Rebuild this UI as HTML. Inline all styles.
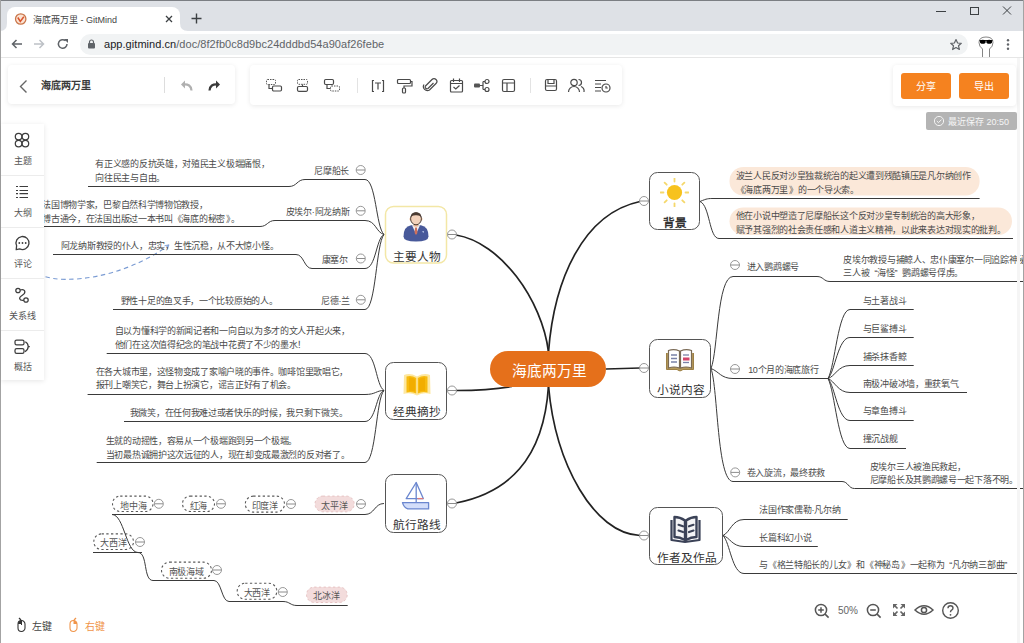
<!DOCTYPE html>
<html lang="zh-CN"><head><meta charset="utf-8"><style>
html,body{margin:0;padding:0;width:1024px;height:643px;overflow:hidden;background:#fff;font-family:"Liberation Sans", sans-serif}
.t{position:absolute;white-space:nowrap;font-family:"Liberation Sans", sans-serif}
svg{display:block}
</style></head><body>
<svg style="position:absolute;left:0;top:0;z-index:0" width="1024" height="643" viewBox="0 0 1024 643"><rect x="729.5" y="167" width="250.10000000000002" height="28.5" rx="14" fill="#fbe8d9"/><rect x="729.5" y="207.5" width="282.5" height="27.5" rx="13.75" fill="#fbe8d9"/><rect x="112.5" y="496.1" width="40.5" height="15.4" rx="7.7" fill="#fff" stroke="#5a5a5a" stroke-width="1.1" stroke-dasharray="2.3 2.4"/><rect x="182.5" y="496.1" width="32.0" height="15.4" rx="7.7" fill="#fff" stroke="#5a5a5a" stroke-width="1.1" stroke-dasharray="2.3 2.4"/><rect x="245.3" y="496.1" width="39.2" height="16.0" rx="8.0" fill="#fff" stroke="#5a5a5a" stroke-width="1.1" stroke-dasharray="2.3 2.4"/><rect x="315.0" y="496.1" width="39.19999999999999" height="15.699999999999932" rx="7.849999999999966" fill="#f3dcdc" stroke="#e6c3c3" stroke-width="1" stroke-dasharray="2.3 2.4"/><rect x="93.8" y="533.9" width="39.7" height="15.6" rx="7.8" fill="#fff" stroke="#5a5a5a" stroke-width="1.1" stroke-dasharray="2.3 2.4"/><rect x="161.5" y="562.1" width="50.0" height="16.2" rx="8.1" fill="#fff" stroke="#5a5a5a" stroke-width="1.1" stroke-dasharray="2.3 2.4"/><rect x="237.2" y="583.2" width="39.6" height="16.1" rx="8.0" fill="#fff" stroke="#5a5a5a" stroke-width="1.1" stroke-dasharray="2.3 2.4"/><rect x="306.5" y="587.1" width="40.69999999999999" height="15.399999999999977" rx="7.699999999999989" fill="#f3dcdc" stroke="#e6c3c3" stroke-width="1" stroke-dasharray="2.3 2.4"/><path d="M45.5,276.7 C65,283 120,280 168.6,245.3" fill="none" stroke="#7a9bd3" stroke-width="1.1" stroke-dasharray="4.5 3.5"/><path d="M164.5,245.8 L169,244.8 L167.2,249" fill="none" stroke="#7a9bd3" stroke-width="0.9"/><path d="M88,186.5 L289,186.5" fill="none" stroke="#3a3a3a" stroke-width="1"/><path d="M289,186.5 C297.0,186.5 297.0,179.5 305,179.5" fill="none" stroke="#3a3a3a" stroke-width="1"/><path d="M305,179.5 L365,179.5" fill="none" stroke="#3a3a3a" stroke-width="1"/><path d="M365,179.5 C376,179.5 376,227.5 384,234.5" fill="none" stroke="#3a3a3a" stroke-width="1"/><path d="M40,226.5 L260,226.5" fill="none" stroke="#3a3a3a" stroke-width="1"/><path d="M260,226.5 C267.5,226.5 267.5,220.5 275,220.5" fill="none" stroke="#3a3a3a" stroke-width="1"/><path d="M275,220.5 L365,220.5" fill="none" stroke="#3a3a3a" stroke-width="1"/><path d="M365,220.5 C376,220.5 376,232.5 384,234.5" fill="none" stroke="#3a3a3a" stroke-width="1"/><path d="M53,254.5 L296,254.5" fill="none" stroke="#3a3a3a" stroke-width="1"/><path d="M296,254.5 C304.0,254.5 304.0,268.5 312,268.5" fill="none" stroke="#3a3a3a" stroke-width="1"/><path d="M312,268.5 L365,268.5" fill="none" stroke="#3a3a3a" stroke-width="1"/><path d="M365,268.5 C376,268.5 376,238.5 384,234.5" fill="none" stroke="#3a3a3a" stroke-width="1"/><path d="M113,309.5 L365,309.5" fill="none" stroke="#3a3a3a" stroke-width="1"/><path d="M365,309.5 C376,309.5 376,243.5 384,234.5" fill="none" stroke="#3a3a3a" stroke-width="1"/><path d="M106.7,353.5 L365,353.5" fill="none" stroke="#3a3a3a" stroke-width="1"/><path d="M365,353.5 C376,353.5 376,385.5 384,390.5" fill="none" stroke="#3a3a3a" stroke-width="1"/><path d="M87.6,394.5 L365,394.5" fill="none" stroke="#3a3a3a" stroke-width="1"/><path d="M365,394.5 C376,394.5 376,390.5 384,390.5" fill="none" stroke="#3a3a3a" stroke-width="1"/><path d="M124,421.5 L365,421.5" fill="none" stroke="#3a3a3a" stroke-width="1"/><path d="M365,421.5 C376,421.5 376,393.5 384,390.5" fill="none" stroke="#3a3a3a" stroke-width="1"/><path d="M96.7,462.5 L365,462.5" fill="none" stroke="#3a3a3a" stroke-width="1"/><path d="M365,462.5 C376,462.5 376,398.5 384,390.5" fill="none" stroke="#3a3a3a" stroke-width="1"/><path d="M112,514.5 L365,514.5" fill="none" stroke="#3a3a3a" stroke-width="1"/><path d="M365,514.5 C374.5,514.5 374.5,503.5 384,503.5" fill="none" stroke="#3a3a3a" stroke-width="1"/><path d="M112,514.5 C124,514.5 126,552.5 138,552.5" fill="none" stroke="#3a3a3a" stroke-width="1"/><path d="M93,552.5 L142,552.5" fill="none" stroke="#3a3a3a" stroke-width="1"/><path d="M138,552.5 C148,552.5 143,580.5 153,580.5" fill="none" stroke="#3a3a3a" stroke-width="1"/><path d="M153,580.5 L214,580.5" fill="none" stroke="#3a3a3a" stroke-width="1"/><path d="M214,580.5 C221.5,580.5 221.5,601.5 229,601.5" fill="none" stroke="#3a3a3a" stroke-width="1"/><path d="M229,601.5 L283,601.5" fill="none" stroke="#3a3a3a" stroke-width="1"/><path d="M283,601.5 C290.0,601.5 290.0,605.5 297,605.5" fill="none" stroke="#3a3a3a" stroke-width="1"/><path d="M297,605.5 L347.7,605.5" fill="none" stroke="#3a3a3a" stroke-width="1"/><path d="M700,201.5 C707,198.5 708,198.5 714,198.5" fill="none" stroke="#3a3a3a" stroke-width="1"/><path d="M714,198.5 L979.6,198.5" fill="none" stroke="#3a3a3a" stroke-width="1"/><path d="M700,201.5 C710,205.5 709,238.5 719,238.5" fill="none" stroke="#3a3a3a" stroke-width="1"/><path d="M719,238.5 L1013,238.5" fill="none" stroke="#3a3a3a" stroke-width="1"/><path d="M711,368.5 C718,351.5 717,276.5 733,276.5" fill="none" stroke="#3a3a3a" stroke-width="1"/><path d="M733,276.5 L817,276.5" fill="none" stroke="#3a3a3a" stroke-width="1"/><path d="M817,276.5 C823.5,276.5 823.5,281.5 830,281.5" fill="none" stroke="#3a3a3a" stroke-width="1"/><path d="M830,281.5 L1024,281.5" fill="none" stroke="#3a3a3a" stroke-width="1"/><path d="M711,368.5 C719,371.5 721,378.5 733,378.5" fill="none" stroke="#3a3a3a" stroke-width="1"/><path d="M733,378.5 L828,378.5" fill="none" stroke="#3a3a3a" stroke-width="1"/><path d="M828,378.5 C835,366.5 838,309.5 850,309.5" fill="none" stroke="#3a3a3a" stroke-width="1"/><path d="M850,309.5 L913.7,309.5" fill="none" stroke="#3a3a3a" stroke-width="1"/><path d="M828,378.5 C835,371.5 838,337.5 850,337.5" fill="none" stroke="#3a3a3a" stroke-width="1"/><path d="M850,337.5 L913.7,337.5" fill="none" stroke="#3a3a3a" stroke-width="1"/><path d="M828,378.5 C835,376.5 838,365.5 850,365.5" fill="none" stroke="#3a3a3a" stroke-width="1"/><path d="M850,365.5 L913.7,365.5" fill="none" stroke="#3a3a3a" stroke-width="1"/><path d="M828,378.5 C835,381.5 838,392.5 850,392.5" fill="none" stroke="#3a3a3a" stroke-width="1"/><path d="M850,392.5 L967,392.5" fill="none" stroke="#3a3a3a" stroke-width="1"/><path d="M828,378.5 C835,386.5 838,420.5 850,420.5" fill="none" stroke="#3a3a3a" stroke-width="1"/><path d="M850,420.5 L913.7,420.5" fill="none" stroke="#3a3a3a" stroke-width="1"/><path d="M828,378.5 C835,391.5 838,448.5 850,448.5" fill="none" stroke="#3a3a3a" stroke-width="1"/><path d="M850,448.5 L906,448.5" fill="none" stroke="#3a3a3a" stroke-width="1"/><path d="M711,368.5 C718,388.5 717,481.5 733,481.5" fill="none" stroke="#3a3a3a" stroke-width="1"/><path d="M733,481.5 L842,481.5" fill="none" stroke="#3a3a3a" stroke-width="1"/><path d="M842,481.5 C848.25,481.5 848.25,488.5 854.5,488.5" fill="none" stroke="#3a3a3a" stroke-width="1"/><path d="M854.5,488.5 L1024,488.5" fill="none" stroke="#3a3a3a" stroke-width="1"/><path d="M723,535.5 C730,532.5 732,519.5 744,519.5" fill="none" stroke="#3a3a3a" stroke-width="1"/><path d="M744,519.5 L847.7,519.5" fill="none" stroke="#3a3a3a" stroke-width="1"/><path d="M723,535.5 C730,537.5 732,546.5 744,546.5" fill="none" stroke="#3a3a3a" stroke-width="1"/><path d="M744,546.5 L817.8,546.5" fill="none" stroke="#3a3a3a" stroke-width="1"/><path d="M723,535.5 C730,542.5 732,573.5 744,573.5" fill="none" stroke="#3a3a3a" stroke-width="1"/><path d="M744,573.5 L1018,573.5" fill="none" stroke="#3a3a3a" stroke-width="1"/><path d="M548.5,352 C542.0,299.7 500.5,242.2 456,235" fill="none" stroke="#222" stroke-width="1.7"/><path d="M548.5,352 C554.0,280.2 582.7,213.7 640,201.5" fill="none" stroke="#222" stroke-width="1.7"/><path d="M512,386.5 C495,389.5 475,390.5 456,390.5" fill="none" stroke="#222" stroke-width="1.7"/><path d="M606,369 L640,368" fill="none" stroke="#222" stroke-width="1.7"/><path d="M548.5,386 C543.6,460.9 507.0,492.9 456,503" fill="none" stroke="#222" stroke-width="1.7"/><path d="M548.5,386 C555.4,464.2 593.7,533.3 640,535.5" fill="none" stroke="#222" stroke-width="1.7"/><rect x="385.5" y="206.5" width="61" height="56.5" rx="8" fill="#fff" stroke="#f3e7a6" stroke-width="1.5"/><rect x="385.5" y="362.5" width="61" height="57" rx="8" fill="#fff" stroke="#555" stroke-width="1"/><rect x="385.5" y="474.5" width="61" height="58" rx="8" fill="#fff" stroke="#555" stroke-width="1"/><rect x="649.5" y="172.5" width="50" height="57" rx="8" fill="#fff" stroke="#555" stroke-width="1"/><rect x="649.5" y="339.5" width="61" height="58" rx="8" fill="#fff" stroke="#555" stroke-width="1"/><rect x="649.5" y="507.5" width="73" height="57" rx="8" fill="#fff" stroke="#555" stroke-width="1"/><rect x="490" y="351" width="116" height="36" rx="18" fill="#e5701b"/><circle cx="452" cy="234.5" r="4.5" fill="#fff" stroke="#8c8c8c" stroke-width="0.9"/><path d="M447.7,234.5 H456.3" stroke="#8c8c8c" stroke-width="1"/><circle cx="452" cy="390.5" r="4.5" fill="#fff" stroke="#8c8c8c" stroke-width="0.9"/><path d="M447.7,390.5 H456.3" stroke="#8c8c8c" stroke-width="1"/><circle cx="452" cy="503.5" r="4.5" fill="#fff" stroke="#8c8c8c" stroke-width="0.9"/><path d="M447.7,503.5 H456.3" stroke="#8c8c8c" stroke-width="1"/><circle cx="644" cy="201" r="4.5" fill="#fff" stroke="#8c8c8c" stroke-width="0.9"/><path d="M639.7,201 H648.3" stroke="#8c8c8c" stroke-width="1"/><circle cx="644" cy="368" r="4.5" fill="#fff" stroke="#8c8c8c" stroke-width="0.9"/><path d="M639.7,368 H648.3" stroke="#8c8c8c" stroke-width="1"/><circle cx="644" cy="535.5" r="4.5" fill="#fff" stroke="#8c8c8c" stroke-width="0.9"/><path d="M639.7,535.5 H648.3" stroke="#8c8c8c" stroke-width="1"/><circle cx="360.7" cy="170" r="4.5" fill="#fff" stroke="#8c8c8c" stroke-width="0.9"/><path d="M356.4,170 H365.0" stroke="#8c8c8c" stroke-width="1"/><circle cx="360.7" cy="210.8" r="4.5" fill="#fff" stroke="#8c8c8c" stroke-width="0.9"/><path d="M356.4,210.8 H365.0" stroke="#8c8c8c" stroke-width="1"/><circle cx="360.8" cy="258.5" r="4.5" fill="#fff" stroke="#8c8c8c" stroke-width="0.9"/><path d="M356.5,258.5 H365.1" stroke="#8c8c8c" stroke-width="1"/><circle cx="360.8" cy="299.8" r="4.5" fill="#fff" stroke="#8c8c8c" stroke-width="0.9"/><path d="M356.5,299.8 H365.1" stroke="#8c8c8c" stroke-width="1"/><circle cx="158.8" cy="503.8" r="4.5" fill="#fff" stroke="#8c8c8c" stroke-width="0.9"/><path d="M154.5,503.8 H163.10000000000002" stroke="#8c8c8c" stroke-width="1"/><circle cx="221" cy="503.8" r="4.5" fill="#fff" stroke="#8c8c8c" stroke-width="0.9"/><path d="M216.7,503.8 H225.3" stroke="#8c8c8c" stroke-width="1"/><circle cx="291" cy="504" r="4.5" fill="#fff" stroke="#8c8c8c" stroke-width="0.9"/><path d="M286.7,504 H295.3" stroke="#8c8c8c" stroke-width="1"/><circle cx="361" cy="504" r="4.5" fill="#fff" stroke="#8c8c8c" stroke-width="0.9"/><path d="M356.7,504 H365.3" stroke="#8c8c8c" stroke-width="1"/><circle cx="140" cy="542" r="4.5" fill="#fff" stroke="#8c8c8c" stroke-width="0.9"/><path d="M135.7,542 H144.3" stroke="#8c8c8c" stroke-width="1"/><circle cx="217" cy="570" r="4.5" fill="#fff" stroke="#8c8c8c" stroke-width="0.9"/><path d="M212.7,570 H221.3" stroke="#8c8c8c" stroke-width="1"/><circle cx="282.8" cy="592" r="4.5" fill="#fff" stroke="#8c8c8c" stroke-width="0.9"/><path d="M278.5,592 H287.1" stroke="#8c8c8c" stroke-width="1"/><circle cx="735" cy="265" r="4.5" fill="#fff" stroke="#8c8c8c" stroke-width="0.9"/><path d="M730.7,265 H739.3" stroke="#8c8c8c" stroke-width="1"/><circle cx="735" cy="369" r="4.5" fill="#fff" stroke="#8c8c8c" stroke-width="0.9"/><path d="M730.7,369 H739.3" stroke="#8c8c8c" stroke-width="1"/><circle cx="735.2" cy="472.4" r="4.5" fill="#fff" stroke="#8c8c8c" stroke-width="0.9"/><path d="M730.9000000000001,472.4 H739.5" stroke="#8c8c8c" stroke-width="1"/></svg><svg style="position:absolute;left:402px;top:211px;" width="28" height="31" viewBox="0 0 28 31">
<path d="M1.5 25.5 Q1.5 15.5 9 14.2 L19 14.2 Q26.5 15.5 26.5 25.5 Q26.5 30.5 14 30.5 Q1.5 30.5 1.5 25.5Z" fill="#48599a"/>
<path d="M10 14.3 L14 23 L18 14.3Z" fill="#f3eeee"/>
<path d="M13.1 16.5 L14.9 16.5 L15.4 22 L14 24 L12.6 22Z" fill="#d0705a"/>
<rect x="11.8" y="11.5" width="4.4" height="4" fill="#e9b28f"/>
<ellipse cx="8.6" cy="8" rx="1.1" ry="1.6" fill="#eebc98"/><ellipse cx="19.4" cy="8" rx="1.1" ry="1.6" fill="#eebc98"/>
<ellipse cx="14" cy="7.8" rx="5.4" ry="6" fill="#f3d2bb" stroke="#3a2e28" stroke-width="0.9"/>
<path d="M8.7 7.5 Q8.2 1.2 14 1.2 Q19.8 1.2 19.3 7.5 Q18.8 4 14 4.2 Q9.2 4 8.7 7.5Z" fill="#4a3b32"/>
<path d="M20 20.5 L22 20 L21.5 22Z" fill="#c5d2ef"/>
</svg><svg style="position:absolute;left:400px;top:368px;" width="34" height="30" viewBox="0 0 34 30">
<path d="M4 7 Q10 4.5 17 8.5 Q24 4.5 30 7 L30.5 26 Q24 24 17 27.5 Q10 24 3.5 26Z" fill="#fde7a0"/>
<path d="M6.5 8.5 Q11.5 7 16.2 10 L16.2 25.5 Q11.5 23 6.5 24.5Z" fill="#f7bb10"/>
<path d="M17.8 10 Q22.5 7 27.5 8.5 L27.5 24.5 Q22.5 23 17.8 25.5Z" fill="#f7bb10"/>
<path d="M9 9.5 Q12.5 9 15 11 L15 23.8 Q12.5 22.5 9 23Z" fill="#f2ad00"/>
<path d="M19 11 Q21.5 9 25 9.5 L25 23 Q21.5 22.5 19 23.8Z" fill="#f2ad00"/>
</svg><svg style="position:absolute;left:400px;top:480px;" width="31" height="31" viewBox="0 0 31 31">
<path d="M16.2 2.5 L6.2 18.6 L23.3 18.6 Z" fill="#fff" stroke="#6b87cf" stroke-width="1.3" stroke-linejoin="round"/>
<path d="M17.5 18.6 L23.3 18.6" stroke="#e07a7a" stroke-width="1.3"/>
<path d="M16.2 2.5 V22.5" stroke="#6b87cf" stroke-width="1.3"/>
<path d="M2.5 22.7 L28.6 22.7 L28.6 28.9 L7.8 28.9 Q3.8 27.5 2.5 22.7Z" fill="#d3defa" stroke="#6b87cf" stroke-width="1.3" stroke-linejoin="round"/>
</svg><svg style="position:absolute;left:659.5px;top:178px;" width="29" height="29" viewBox="0 0 29 29"><path d="M25.50,14.50 L28.50,14.50" stroke="#f5d86c" stroke-width="1.8" stroke-linecap="round"/><path d="M22.28,22.28 L24.40,24.40" stroke="#f5d86c" stroke-width="1.8" stroke-linecap="round"/><path d="M14.50,25.50 L14.50,28.50" stroke="#f5d86c" stroke-width="1.8" stroke-linecap="round"/><path d="M6.72,22.28 L4.60,24.40" stroke="#f5d86c" stroke-width="1.8" stroke-linecap="round"/><path d="M3.50,14.50 L0.50,14.50" stroke="#f5d86c" stroke-width="1.8" stroke-linecap="round"/><path d="M6.72,6.72 L4.60,4.60" stroke="#f5d86c" stroke-width="1.8" stroke-linecap="round"/><path d="M14.50,3.50 L14.50,0.50" stroke="#f5d86c" stroke-width="1.8" stroke-linecap="round"/><path d="M22.28,6.72 L24.40,4.60" stroke="#f5d86c" stroke-width="1.8" stroke-linecap="round"/><circle cx="14.5" cy="14.5" r="7.6" fill="#f7c21d"/></svg><svg style="position:absolute;left:664px;top:347px;" width="32" height="28" viewBox="0 0 32 28">
<path d="M2.5 6 L2.5 22.5 L13 22.5 Q16 25.5 19 22.5 L29.5 22.5 L29.5 6" fill="#b59a5c" stroke="#9d8046" stroke-width="1"/>
<path d="M4.5 3.5 Q10 1.5 15.5 4 L15.5 21 Q10 19 4.5 21Z" fill="#fff" stroke="#7a6a55" stroke-width="1.2"/>
<path d="M16.5 4 Q22 1.5 27.5 3.5 L27.5 21 Q22 19 16.5 21Z" fill="#fff" stroke="#7a6a55" stroke-width="1.2"/>
<path d="M7 8 H13 M7 11.5 H13 M7 15 H13" stroke="#7a82a8" stroke-width="1.3"/>
<path d="M19 8 H25" stroke="#7a82a8" stroke-width="1.3"/>
<rect x="19" y="10.5" width="6.5" height="3" fill="#d4456a"/>
<path d="M19 15.5 H25" stroke="#7a82a8" stroke-width="1.3"/>
</svg><svg style="position:absolute;left:669px;top:514px;" width="34" height="30" viewBox="0 0 34 30">
<path d="M2.5 6 V26 L16 28 L30.5 26 V6" fill="none" stroke="#3b4257" stroke-width="2.2" stroke-linejoin="round"/>
<path d="M5.5 3 Q11 3 16 6.5 L16 26 Q11 23 5.5 23Z" fill="#f4f4f6" stroke="#3b4257" stroke-width="2.4" stroke-linejoin="round"/>
<path d="M27.5 3 Q22 3 17 6.5 L17 26 Q22 23 27.5 23Z" fill="#f4f4f6" stroke="#3b4257" stroke-width="2.4" stroke-linejoin="round"/>
<path d="M9.5 10.8 L14 12.3 M9.5 16.6 L14 18.1 M24.5 10.8 L20 12.3 M24.5 16.6 L20 18.1" stroke="#3b4257" stroke-width="2.1" stroke-linecap="round"/>
</svg><div class="t" style="left:392.65px;top:250.00px;font-size:11.7px;line-height:14.04px;color:#333;font-weight:normal;">主要人物</div><div class="t" style="left:392.65px;top:405.00px;font-size:11.7px;line-height:14.04px;color:#333;font-weight:normal;">经典摘抄</div><div class="t" style="left:392.65px;top:518.00px;font-size:11.7px;line-height:14.04px;color:#333;font-weight:normal;">航行路线</div><div class="t" style="left:662.65px;top:216.00px;font-size:11.7px;line-height:14.04px;color:#333;font-weight:bold;">背景</div><div class="t" style="left:656.65px;top:383.00px;font-size:11.7px;line-height:14.04px;color:#333;font-weight:normal;">小说内容</div><div class="t" style="left:656.65px;top:551.00px;font-size:11.7px;line-height:14.04px;color:#333;font-weight:normal;">作者及作品</div><div class="t" style="left:511.56px;top:363.00px;font-size:14.7px;line-height:17.64px;color:#fff;font-weight:normal;">海底两万里</div><div class="t" style="left:314.33px;top:166.00px;font-size:9px;line-height:10.80px;color:#4b4b4b;font-weight:normal;letter-spacing:-0.3px;">尼摩船长</div><div class="t" style="left:285.73px;top:207.00px;font-size:9px;line-height:10.80px;color:#4b4b4b;font-weight:normal;letter-spacing:-0.3px;">皮埃尔·阿龙纳斯</div><div class="t" style="left:321.73px;top:255.00px;font-size:9px;line-height:10.80px;color:#4b4b4b;font-weight:normal;letter-spacing:-0.3px;">康塞尔</div><div class="t" style="left:321.13px;top:296.00px;font-size:9px;line-height:10.80px;color:#4b4b4b;font-weight:normal;letter-spacing:-0.3px;">尼德·兰</div><div class="t" style="left:95.33px;top:159.00px;font-size:9px;line-height:10.80px;color:#4b4b4b;font-weight:normal;letter-spacing:-0.3px;">有正义感的反抗英雄，对殖民主义极端痛恨，</div><div class="t" style="left:95.33px;top:173.00px;font-size:9px;line-height:10.80px;color:#4b4b4b;font-weight:normal;letter-spacing:-0.3px;">向往民主与自由。</div><div class="t" style="left:42.23px;top:200.00px;font-size:9px;line-height:10.80px;color:#4b4b4b;font-weight:normal;letter-spacing:-0.3px;">法国博物学家，巴黎自然科学博物馆教授，</div><div class="t" style="left:42.23px;top:214.00px;font-size:9px;line-height:10.80px;color:#4b4b4b;font-weight:normal;letter-spacing:-0.3px;">博古通今，在法国出版过一本书叫《海底的秘密<span style="margin-left:1.2px">》</span>。</div><div class="t" style="left:60.73px;top:241.00px;font-size:9px;line-height:10.80px;color:#4b4b4b;font-weight:normal;letter-spacing:-0.3px;">阿龙纳斯教授的仆人，忠实，生性沉稳，从不大惊小怪。</div><div class="t" style="left:120.73px;top:296.00px;font-size:9px;line-height:10.80px;color:#4b4b4b;font-weight:normal;letter-spacing:-0.3px;">野性十足的鱼叉手，一个比较原始的人。</div><div class="t" style="left:114.73px;top:326.00px;font-size:9px;line-height:10.80px;color:#4b4b4b;font-weight:normal;letter-spacing:-0.3px;">自以为懂科学的新闻记者和一向自以为多才的文人开起火来，</div><div class="t" style="left:114.73px;top:340.00px;font-size:9px;line-height:10.80px;color:#4b4b4b;font-weight:normal;letter-spacing:-0.3px;">他们在这次值得纪念的笔战中花费了不少的墨水！</div><div class="t" style="left:95.73px;top:367.00px;font-size:9px;line-height:10.80px;color:#4b4b4b;font-weight:normal;letter-spacing:-0.3px;">在各大城市里，这怪物变成了家喻户晓的事件。咖啡馆里歌唱它，</div><div class="t" style="left:95.73px;top:380.00px;font-size:9px;line-height:10.80px;color:#4b4b4b;font-weight:normal;letter-spacing:-0.3px;">报刊上嘲笑它，舞台上扮演它，谣言正好有了机会。</div><div class="t" style="left:129.73px;top:408.00px;font-size:9px;line-height:10.80px;color:#4b4b4b;font-weight:normal;letter-spacing:-0.3px;">我微笑，在任何我难过或者快乐的时候，我只剩下微笑。</div><div class="t" style="left:105.73px;top:436.00px;font-size:9px;line-height:10.80px;color:#4b4b4b;font-weight:normal;letter-spacing:-0.3px;">生就的动摇性，容易从一个极端跑到另一个极端。</div><div class="t" style="left:105.73px;top:450.00px;font-size:9px;line-height:10.80px;color:#4b4b4b;font-weight:normal;letter-spacing:-0.3px;">当初最热诚拥护这次远征的人，现在却变成最激烈的反对者了。</div><div class="t" style="left:120.23px;top:501.00px;font-size:9px;line-height:10.80px;color:#555;font-weight:normal;letter-spacing:-0.3px;">地中海</div><div class="t" style="left:189.73px;top:501.00px;font-size:9px;line-height:10.80px;color:#555;font-weight:normal;letter-spacing:-0.3px;">红海</div><div class="t" style="left:251.73px;top:501.00px;font-size:9px;line-height:10.80px;color:#555;font-weight:normal;letter-spacing:-0.3px;">印度洋</div><div class="t" style="left:321.23px;top:501.00px;font-size:9px;line-height:10.80px;color:#555;font-weight:normal;letter-spacing:-0.3px;">太平洋</div><div class="t" style="left:100.33px;top:538.00px;font-size:9px;line-height:10.80px;color:#555;font-weight:normal;letter-spacing:-0.3px;">大西洋</div><div class="t" style="left:168.73px;top:567.00px;font-size:9px;line-height:10.80px;color:#555;font-weight:normal;letter-spacing:-0.3px;">南极海域</div><div class="t" style="left:243.73px;top:588.00px;font-size:9px;line-height:10.80px;color:#555;font-weight:normal;letter-spacing:-0.3px;">大西洋</div><div class="t" style="left:313.23px;top:591.00px;font-size:9px;line-height:10.80px;color:#555;font-weight:normal;letter-spacing:-0.3px;">北冰洋</div><div class="t" style="left:735.73px;top:171.00px;font-size:9px;line-height:10.80px;color:#4b4b4b;font-weight:normal;letter-spacing:-0.3px;">波兰人民反对沙皇独裁统治的起义遭到残酷镇压是凡尔纳创作</div><div class="t" style="left:735.73px;top:185.00px;font-size:9px;line-height:10.80px;color:#4b4b4b;font-weight:normal;letter-spacing:-0.3px;">《海底两万里<span style="margin-left:1.2px">》</span>的一个导火索。</div><div class="t" style="left:735.73px;top:211.00px;font-size:9px;line-height:10.80px;color:#4b4b4b;font-weight:normal;letter-spacing:-0.3px;">他在小说中塑造了尼摩船长这个反对沙皇专制统治的高大形象，</div><div class="t" style="left:735.73px;top:225.00px;font-size:9px;line-height:10.80px;color:#4b4b4b;font-weight:normal;letter-spacing:-0.3px;">赋予其强烈的社会责任感和人道主义精神，以此来表达对现实的批判。</div><div class="t" style="left:746.73px;top:262.00px;font-size:9px;line-height:10.80px;color:#4b4b4b;font-weight:normal;letter-spacing:-0.3px;">进入鹦鹉螺号</div><div class="t" style="left:843.33px;top:255.00px;font-size:9px;line-height:10.80px;color:#4b4b4b;font-weight:normal;letter-spacing:-0.3px;white-space:nowrap">皮埃尔教授与捕鲸人、忠仆康塞尔一同追踪神秘</div><div class="t" style="left:843.33px;top:268.00px;font-size:9px;line-height:10.80px;color:#4b4b4b;font-weight:normal;letter-spacing:-0.3px;white-space:nowrap">三人被<span style="margin-left:5px">“</span>海怪<span style="margin-right:5px">”</span>鹦鹉螺号俘虏。</div><div class="t" style="left:748.13px;top:365.00px;font-size:9px;line-height:10.80px;color:#4b4b4b;font-weight:normal;letter-spacing:-0.3px;">10个月的海底旅行</div><div class="t" style="left:862.73px;top:296.00px;font-size:9px;line-height:10.80px;color:#4b4b4b;font-weight:normal;letter-spacing:-0.3px;">与土著战斗</div><div class="t" style="left:862.73px;top:324.00px;font-size:9px;line-height:10.80px;color:#4b4b4b;font-weight:normal;letter-spacing:-0.3px;">与巨鲨搏斗</div><div class="t" style="left:862.73px;top:352.00px;font-size:9px;line-height:10.80px;color:#4b4b4b;font-weight:normal;letter-spacing:-0.3px;">捕杀抹香鲸</div><div class="t" style="left:862.73px;top:379.00px;font-size:9px;line-height:10.80px;color:#4b4b4b;font-weight:normal;letter-spacing:-0.3px;">南极冲破冰墙，重获氧气</div><div class="t" style="left:862.73px;top:406.00px;font-size:9px;line-height:10.80px;color:#4b4b4b;font-weight:normal;letter-spacing:-0.3px;">与章鱼搏斗</div><div class="t" style="left:862.73px;top:434.00px;font-size:9px;line-height:10.80px;color:#4b4b4b;font-weight:normal;letter-spacing:-0.3px;">撞沉战舰</div><div class="t" style="left:746.73px;top:468.00px;font-size:9px;line-height:10.80px;color:#4b4b4b;font-weight:normal;letter-spacing:-0.3px;">卷入旋流，最终获救</div><div class="t" style="left:869.73px;top:462.00px;font-size:9px;line-height:10.80px;color:#4b4b4b;font-weight:normal;letter-spacing:-0.3px;">皮埃尔三人被渔民救起，</div><div class="t" style="left:869.73px;top:475.00px;font-size:9px;line-height:10.80px;color:#4b4b4b;font-weight:normal;letter-spacing:-0.3px;">尼摩船长及其鹦鹉螺号一起下落不明。</div><div class="t" style="left:759.23px;top:505.00px;font-size:9px;line-height:10.80px;color:#4b4b4b;font-weight:normal;letter-spacing:-0.3px;">法国作家儒勒·凡尔纳</div><div class="t" style="left:759.23px;top:533.00px;font-size:9px;line-height:10.80px;color:#4b4b4b;font-weight:normal;letter-spacing:-0.3px;">长篇科幻小说</div><div class="t" style="left:759.23px;top:560.00px;font-size:9px;line-height:10.80px;color:#4b4b4b;font-weight:normal;letter-spacing:-0.3px;">与《格兰特船长的儿女<span style="margin-left:1.2px">》</span>和《神秘岛<span style="margin-left:1.2px">》</span>一起称为<span style="margin-left:5px">“</span>凡尔纳三部曲<span style="margin-right:5px">”</span></div><div style="position:absolute;left:0px;top:0px;width:1024px;height:31px;background:#dee1e6"></div><div style="position:absolute;left:0px;top:0px;width:1024px;height:1px;background:#7b7e83"></div><div style="position:absolute;left:7px;top:7px;width:173px;height:24px;background:#fff;border-radius:8px 8px 0 0"></div><svg style="position:absolute;left:172px;top:23px;" width="16" height="8" viewBox="0 0 16 8"><path d="M0 0 L8 0 L8 0 Q8 8 16 8 L0 8Z" fill="#fff"/></svg><svg style="position:absolute;left:0px;top:23px;" width="7" height="8" viewBox="0 0 7 8"><path d="M7 0 Q7 8 0 8 L7 8Z" fill="#fff"/></svg><div style="position:absolute;left:0px;top:31px;width:1024px;height:26px;background:#fff"></div><div style="position:absolute;left:0px;top:57px;width:1024px;height:1px;background:#e6e6e6"></div><div style="position:absolute;left:80px;top:34px;width:888px;height:21px;background:#f1f3f4;border-radius:11px"></div><svg style="position:absolute;left:14px;top:12px;" width="14" height="14" viewBox="0 0 14 14"><circle cx="6.7" cy="7" r="5.2" fill="#fbe3d3" stroke="#c9764a" stroke-width="1.3"/><path d="M3.8 5.5 L6.3 9.5 L9.8 4.8" stroke="#d9542c" stroke-width="1.5" fill="none"/></svg><div class="t" style="left:33px;top:14px;font-size:9px;line-height:12px;color:#454545;font-weight:normal;">海底两万里 - GitMind</div><svg style="position:absolute;left:164px;top:14px;" width="10" height="10" viewBox="0 0 10 10"><path d="M2 2 L8 8 M8 2 L2 8" stroke="#3c4043" stroke-width="1.3"/></svg><svg style="position:absolute;left:190px;top:12px;" width="13" height="13" viewBox="0 0 13 13"><path d="M6.5 1.5 V11.5 M1.5 6.5 H11.5" stroke="#3c4043" stroke-width="1.4"/></svg><svg style="position:absolute;left:934px;top:6px;" width="14" height="10" viewBox="0 0 14 10"><path d="M2 5.5 H12" stroke="#3c4043" stroke-width="1"/></svg><svg style="position:absolute;left:967px;top:5px;" width="14" height="12" viewBox="0 0 14 12"><rect x="3.5" y="2.5" width="8" height="7" fill="none" stroke="#3c4043" stroke-width="1"/></svg><svg style="position:absolute;left:1000px;top:5px;" width="14" height="12" viewBox="0 0 14 12"><path d="M3 1.5 L11 9.5 M11 1.5 L3 9.5" stroke="#3c4043" stroke-width="1"/></svg><svg style="position:absolute;left:10px;top:38px;" width="14" height="12" viewBox="0 0 14 12"><path d="M12 6 H2.5 M6.5 2 L2.5 6 L6.5 10" stroke="#5f6368" stroke-width="1.5" fill="none"/></svg><svg style="position:absolute;left:32px;top:38px;" width="14" height="12" viewBox="0 0 14 12"><path d="M2 6 H11.5 M7.5 2 L11.5 6 L7.5 10" stroke="#bdc1c6" stroke-width="1.5" fill="none"/></svg><svg style="position:absolute;left:56px;top:37px;" width="14" height="14" viewBox="0 0 14 14"><path d="M11 7 A4.3 4.3 0 1 1 9.6 3.8" stroke="#5f6368" stroke-width="1.5" fill="none"/><path d="M8 2 L12 2 L12 6Z" fill="#5f6368"/></svg><svg style="position:absolute;left:87px;top:39px;" width="9" height="10" viewBox="0 0 9 10"><rect x="1" y="4" width="7" height="5.5" rx="1" fill="#5f6368"/><path d="M2.5 4.5 V3 A2 2 0 0 1 6.5 3 V4.5" stroke="#5f6368" stroke-width="1.2" fill="none"/></svg><div class="t" style="left:104px;top:38px;font-size:11px;line-height:13px;color:#5f6368;letter-spacing:0.05px"><span style="color:#202124">app.gitmind.cn</span>/doc/8f2fb0c8d9bc24dddbd54a90af26febe</div><svg style="position:absolute;left:949px;top:38px;" width="14" height="13" viewBox="0 0 14 13"><path d="M7 1.5 L8.6 5 L12.3 5.3 L9.5 7.8 L10.4 11.5 L7 9.5 L3.6 11.5 L4.5 7.8 L1.7 5.3 L5.4 5 Z" fill="none" stroke="#5f6368" stroke-width="1.2" stroke-linejoin="round"/></svg><svg style="position:absolute;left:976px;top:34px;" width="20" height="24" viewBox="0 0 20 24"><path d="M6.5,15 Q3,12.5 3,8.5 Q3,3 10,3 Q17,3 17,8.5 Q17,12.5 13.5,15 L13.5,23 M6.5,15 L6.5,23" fill="#fff" stroke="#777" stroke-width="0.9"/><ellipse cx="6.8" cy="7.8" rx="2.9" ry="2" fill="#000"/><ellipse cx="13.2" cy="7.8" rx="2.9" ry="2" fill="#000"/><path d="M3.5 6.6 H16.5" stroke="#000" stroke-width="1"/></svg><svg style="position:absolute;left:1005px;top:38px;" width="6" height="13" viewBox="0 0 6 13"><circle cx="3" cy="2.2" r="1.2" fill="#5f6368"/><circle cx="3" cy="6.5" r="1.2" fill="#5f6368"/><circle cx="3" cy="10.8" r="1.2" fill="#5f6368"/></svg><div style="position:absolute;left:0px;top:0px;width:1px;height:643px;background:#a3a3a3"></div><div style="position:absolute;left:1023px;top:0px;width:1px;height:643px;background:#a3a3a3"></div><div style="position:absolute;left:1017px;top:58px;width:3px;height:585px;background:#f5f5f5"></div><div style="position:absolute;left:8px;top:65px;width:227px;height:39px;background:#fff;border-radius:4px;box-shadow:0 1px 5px rgba(0,0,0,0.09)"></div><svg style="position:absolute;left:18px;top:79px;" width="12" height="15" viewBox="0 0 12 15"><path d="M8.5 1.5 L2.5 7.5 L8.5 13.5" stroke="#666" stroke-width="1.4" fill="none"/></svg><div class="t" style="left:41px;top:78.5px;font-size:10px;line-height:13px;color:#3a3a3a;font-weight:bold;">海底两万里</div><div style="position:absolute;left:164px;top:77px;width:1px;height:16px;background:#ddd"></div><svg style="position:absolute;left:179px;top:78px;" width="16" height="15" viewBox="0 0 16 15"><path d="M6 2.5 L2 6.5 L6 10.5 Z" fill="#b0b0b0"/><path d="M4 6.5 Q12 5.5 12.5 12.5" stroke="#b0b0b0" stroke-width="2.2" fill="none"/></svg><svg style="position:absolute;left:206px;top:78px;" width="16" height="15" viewBox="0 0 16 15"><path d="M10 2.5 L14 6.5 L10 10.5 Z" fill="#3a3a3a"/><path d="M12 6.5 Q4 5.5 3.5 12.5" stroke="#3a3a3a" stroke-width="2.2" fill="none"/></svg><div style="position:absolute;left:250px;top:65px;width:372px;height:40px;background:#fff;border-radius:4px;box-shadow:0 1px 5px rgba(0,0,0,0.09)"></div><svg style="position:absolute;left:264px;top:77px;" width="20" height="17" viewBox="0 0 20 17"><rect x="2.5" y="2.5" width="9" height="5" rx="1" stroke="#555" stroke-width="1" fill="none" stroke-dasharray="1.5 1"/><path d="M5 7.5 V11.5 H8" stroke="#4a4a4a" stroke-width="1.2" fill="none"/><rect x="8.5" y="9" width="9" height="5" rx="1.2" stroke="#4a4a4a" stroke-width="1.2" fill="none"/></svg><svg style="position:absolute;left:295px;top:77px;" width="16" height="17" viewBox="0 0 16 17"><rect x="2.5" y="2.5" width="10" height="4.8" rx="1" stroke="#555" stroke-width="1" fill="none" stroke-dasharray="1.5 1"/><path d="M7.5 7.5 V9" stroke="#4a4a4a" stroke-width="1.2" fill="none"/><rect x="2.5" y="9.5" width="10" height="4.8" rx="1.2" stroke="#4a4a4a" stroke-width="1.2" fill="none"/></svg><svg style="position:absolute;left:322px;top:77px;" width="20" height="17" viewBox="0 0 20 17"><rect x="2.5" y="2.5" width="9" height="5" rx="1.2" stroke="#4a4a4a" stroke-width="1.2" fill="none"/><path d="M5 7.5 V11.5 H8" stroke="#4a4a4a" stroke-width="1.2" fill="none"/><rect x="8.5" y="9" width="9" height="5" rx="1" stroke="#555" stroke-width="1" fill="none" stroke-dasharray="1.5 1"/></svg><div style="position:absolute;left:357px;top:78px;width:1px;height:15px;background:#e3e3e3"></div><svg style="position:absolute;left:370px;top:78px;" width="16" height="16" viewBox="0 0 16 16"><path d="M4 2.5 H2.5 V13.5 H4 M12 2.5 H13.5 V13.5 H12" stroke="#4a4a4a" stroke-width="1.2" fill="none"/><path d="M5 5 H11 M8 5 V11.5" stroke="#4a4a4a" stroke-width="1.2" fill="none"/></svg><svg style="position:absolute;left:395px;top:77px;" width="19" height="17" viewBox="0 0 19 17"><rect x="2.5" y="2.5" width="13" height="4" rx="1" stroke="#4a4a4a" stroke-width="1.2" fill="none"/><path d="M15.5 4.5 H17 V9 H9 V11" stroke="#4a4a4a" stroke-width="1.2" fill="none"/><rect x="7.5" y="11" width="3" height="5" rx="1" stroke="#4a4a4a" stroke-width="1.2" fill="none"/></svg><svg style="position:absolute;left:422px;top:77px;" width="16" height="17" viewBox="0 0 16 17"><path d="M11.5 6 L6 11.5 A1.8 1.8 0 0 1 3.5 9 L10 2.5 A2.8 2.8 0 0 1 14 6.5 L7.5 13 A4 4 0 0 1 2 7.5" stroke="#4a4a4a" stroke-width="1.2" fill="none"/></svg><svg style="position:absolute;left:448px;top:77px;" width="17" height="17" viewBox="0 0 17 17"><rect x="2.5" y="3.5" width="12" height="11.5" rx="1" stroke="#4a4a4a" stroke-width="1.2" fill="none"/><path d="M5.5 1.5 V5 M11.5 1.5 V5 M2.5 6.5 H14.5 M5.5 10 L7.8 12 L11.5 8.5" stroke="#4a4a4a" stroke-width="1.2" fill="none"/></svg><svg style="position:absolute;left:472px;top:78px;" width="20" height="15" viewBox="0 0 20 15"><rect x="2" y="5.5" width="6" height="4" rx="1" fill="#555"/><path d="M8 7.5 H11 M11 3.5 V11.5 M11 3.5 H13 M11 11.5 H13" stroke="#4a4a4a" stroke-width="1.2" fill="none"/><circle cx="15" cy="3.5" r="2" stroke="#4a4a4a" stroke-width="1.2" fill="none"/><circle cx="15" cy="11.5" r="2" stroke="#4a4a4a" stroke-width="1.2" fill="none"/></svg><svg style="position:absolute;left:500px;top:77px;" width="17" height="17" viewBox="0 0 17 17"><rect x="2.5" y="2.5" width="12" height="12" rx="1.5" stroke="#4a4a4a" stroke-width="1.2" fill="none"/><path d="M2.5 6 H14.5 M7 6 V14.5" stroke="#4a4a4a" stroke-width="1.2" fill="none"/></svg><div style="position:absolute;left:530px;top:78px;width:1px;height:15px;background:#e3e3e3"></div><svg style="position:absolute;left:543px;top:77px;" width="16" height="16" viewBox="0 0 16 16"><rect x="2.5" y="2.5" width="11" height="11" rx="1.5" stroke="#4a4a4a" stroke-width="1.2" fill="none"/><path d="M5 2.5 V6.5 H11 V2.5 M2.5 9 H13.5" stroke="#4a4a4a" stroke-width="1.2" fill="none"/></svg><svg style="position:absolute;left:567px;top:77px;" width="19" height="17" viewBox="0 0 19 17"><circle cx="7" cy="5.5" r="3.2" stroke="#4a4a4a" stroke-width="1.2" fill="none"/><path d="M1.5 15 A5.5 5.5 0 0 1 12.5 15" stroke="#4a4a4a" stroke-width="1.2" fill="none"/><path d="M11.5 2.5 A3 3 0 0 1 11.5 8.5 M14 9.5 A5 5 0 0 1 17 15" stroke="#4a4a4a" stroke-width="1.2" fill="none"/></svg><svg style="position:absolute;left:593px;top:77px;" width="20" height="17" viewBox="0 0 20 17"><path d="M2 3.5 H13 M2 7 H8 M2 10.5 H8 M2 14 H8" stroke="#4a4a4a" stroke-width="1.2" fill="none"/><circle cx="13" cy="11" r="4" stroke="#4a4a4a" stroke-width="1.2" fill="none"/><path d="M13 9 V11 H14.8" stroke="#4a4a4a" stroke-width="1.2" fill="none"/></svg><div style="position:absolute;left:893px;top:65px;width:123px;height:41px;background:#fff;border-radius:4px;box-shadow:0 1px 5px rgba(0,0,0,0.09)"></div><div style="position:absolute;left:901px;top:73px;width:50px;height:26px;background:#f5821f;border-radius:3px"></div><div style="position:absolute;left:959px;top:73px;width:50px;height:26px;background:#f5821f;border-radius:3px"></div><div class="t" style="left:916px;top:80px;font-size:10px;line-height:13px;color:#fff;font-weight:normal;">分享</div><div class="t" style="left:974px;top:80px;font-size:10px;line-height:13px;color:#fff;font-weight:normal;">导出</div><div style="position:absolute;left:926px;top:112px;width:91px;height:18px;background:#b4b4b4;border-radius:2px"></div><svg style="position:absolute;left:933px;top:115px;" width="12" height="12" viewBox="0 0 12 12"><circle cx="6" cy="6" r="4.6" fill="none" stroke="#f4f4f4" stroke-width="1"/><path d="M3.8 6 L5.5 7.6 L8.5 4.6" fill="none" stroke="#f4f4f4" stroke-width="1"/></svg><div class="t" style="left:948px;top:115.5px;font-size:9px;line-height:12px;color:#f6f6f6;font-weight:normal;">最近保存 20:50</div><div style="position:absolute;left:1px;top:124px;width:43px;height:256px;background:#fff;box-shadow:0 1px 5px rgba(0,0,0,0.10)"></div><div style="position:absolute;left:1px;top:175px;width:43px;height:1px;background:#ececec"></div><div style="position:absolute;left:1px;top:227px;width:43px;height:1px;background:#ececec"></div><div style="position:absolute;left:1px;top:278px;width:43px;height:1px;background:#ececec"></div><div style="position:absolute;left:1px;top:330px;width:43px;height:1px;background:#ececec"></div><svg style="position:absolute;left:8px;top:125px;" width="30" height="30" viewBox="0 0 30 30"><circle cx="10.6" cy="11.6" r="3.3" stroke="#3d3d3d" stroke-width="1.25" fill="none"/><circle cx="17.4" cy="11.6" r="3.3" stroke="#3d3d3d" stroke-width="1.25" fill="none"/><circle cx="10.6" cy="18.6" r="3.3" stroke="#3d3d3d" stroke-width="1.25" fill="none"/><circle cx="17.4" cy="18.6" r="3.3" stroke="#3d3d3d" stroke-width="1.25" fill="none"/></svg><div class="t" style="left:14px;top:155px;font-size:9px;line-height:12px;color:#555;font-weight:normal;">主题</div><svg style="position:absolute;left:8px;top:178px;" width="30" height="30" viewBox="0 0 30 30"><path d="M8 8.5 H10 M11.5 8.5 H20 M8 12.5 H10 M11.5 12.5 H20 M8 15.7 H10 M11.5 15.7 H20 M8 19.5 H10 M11.5 19.5 H20" stroke="#3d3d3d" stroke-width="1.2" fill="none"/></svg><div class="t" style="left:14px;top:207px;font-size:9px;line-height:12px;color:#555;font-weight:normal;">大纲</div><svg style="position:absolute;left:8px;top:228px;" width="30" height="30" viewBox="0 0 30 30"><path d="M11.75,20.89 A6.5,6.5 0 1 0 8.61,17.75 L8.2,21.7 Z" fill="none" stroke="#3d3d3d" stroke-width="1.3" stroke-linejoin="round"/><circle cx="11.3" cy="15" r="0.9" fill="#3d3d3d"/><circle cx="14.5" cy="15" r="0.9" fill="#3d3d3d"/><circle cx="17.7" cy="15" r="0.9" fill="#3d3d3d"/></svg><div class="t" style="left:14px;top:258px;font-size:9px;line-height:12px;color:#555;font-weight:normal;">评论</div><svg style="position:absolute;left:8px;top:280px;" width="30" height="30" viewBox="0 0 30 30"><circle cx="10" cy="10.5" r="2.2" stroke="#3d3d3d" stroke-width="1.25" fill="none"/><circle cx="18" cy="20" r="2.2" stroke="#3d3d3d" stroke-width="1.25" fill="none"/><path d="M12.2,10 C17.5,8.5 18.5,13 14,15.5 C10.5,17.5 10.8,20.8 15.8,20.3" stroke="#3d3d3d" stroke-width="1.25" fill="none"/></svg><div class="t" style="left:9px;top:310px;font-size:9px;line-height:12px;color:#555;font-weight:normal;">关系线</div><svg style="position:absolute;left:8px;top:332px;" width="30" height="30" viewBox="0 0 30 30"><rect x="7" y="8" width="9" height="4.8" rx="1.6" stroke="#3d3d3d" stroke-width="1.25" fill="none"/><rect x="7" y="16.6" width="9" height="4.8" rx="1.6" stroke="#3d3d3d" stroke-width="1.25" fill="none"/><path d="M17.3,9.8 Q20.2,11.5 20.2,14.6 Q20.2,17.8 17,19.8 M20.2,14.6 H21.8" stroke="#3d3d3d" stroke-width="1.25" fill="none"/></svg><div class="t" style="left:14px;top:361px;font-size:9px;line-height:12px;color:#555;font-weight:normal;">概括</div><svg style="position:absolute;left:16px;top:616px;" width="11" height="17" viewBox="0 0 11 17"><path d="M2 8 A3.5 3.5 0 0 1 9 8 V12 A3.5 3.5 0 0 1 2 12Z" fill="#fff" stroke="#333" stroke-width="1.1"/><path d="M5.5 5 V9" stroke="#333" stroke-width="1"/><path d="M2 8 A3.5 3.5 0 0 1 5.5 4.5 V8Z" fill="#333"/><path d="M3 2 L5 4" stroke="#333" stroke-width="1.2"/></svg><div class="t" style="left:32px;top:619.5px;font-size:10px;line-height:13px;color:#444;font-weight:normal;">左键</div><svg style="position:absolute;left:68px;top:616px;" width="11" height="17" viewBox="0 0 11 17"><path d="M2 8 A3.5 3.5 0 0 1 9 8 V12 A3.5 3.5 0 0 1 2 12Z" fill="#fff" stroke="#f0954a" stroke-width="1.1"/><path d="M9 8 A3.5 3.5 0 0 0 5.5 4.5 V8Z" fill="#f0954a"/><path d="M8 2 L6 4" stroke="#f0954a" stroke-width="1.2"/></svg><div class="t" style="left:85px;top:619.5px;font-size:10px;line-height:13px;color:#f0954a;font-weight:normal;">右键</div><svg style="position:absolute;left:813px;top:602px;" width="18" height="18" viewBox="0 0 18 18"><circle cx="8" cy="8" r="5.6" stroke="#555" stroke-width="1.5" fill="none"/><path d="M12.1 12.1 L15.6 15.6 M5.2 8 H10.8 M8 5.2 V10.8" stroke="#555" stroke-width="1.5" fill="none"/></svg><div class="t" style="left:838px;top:605px;font-size:10px;line-height:12px;color:#666;font-weight:normal;">50%</div><svg style="position:absolute;left:865px;top:602px;" width="18" height="18" viewBox="0 0 18 18"><circle cx="8" cy="8" r="5.6" stroke="#555" stroke-width="1.5" fill="none"/><path d="M12.1 12.1 L15.6 15.6 M5.2 8 H10.8" stroke="#555" stroke-width="1.5" fill="none"/></svg><svg style="position:absolute;left:891px;top:602px;" width="16" height="16" viewBox="0 0 16 16"><path d="M2 2 L6.5 2 L2 6.5Z M14 2 L9.5 2 L14 6.5Z M2 14 L6.5 14 L2 9.5Z M14 14 L9.5 14 L14 9.5Z" fill="#666"/><path d="M3 3 L6.5 6.5 M13 3 L9.5 6.5 M3 13 L6.5 9.5 M13 13 L9.5 9.5" stroke="#666" stroke-width="1.7"/></svg><svg style="position:absolute;left:913px;top:602px;" width="22" height="16" viewBox="0 0 22 16"><path d="M2 8 Q11 -0.5 20 8 Q11 16.5 2 8Z" stroke="#555" stroke-width="1.5" fill="none"/><circle cx="11" cy="8" r="2.6" stroke="#555" stroke-width="1.5" fill="none"/></svg><svg style="position:absolute;left:941px;top:601px;" width="20" height="19" viewBox="0 0 20 19"><circle cx="9.5" cy="9.5" r="7.8" fill="none" stroke="#555" stroke-width="1.4"/><path d="M7 7.3 Q7 4.8 9.5 4.8 Q12 4.8 12 7.1 Q12 8.6 10.3 9.4 Q9.5 9.9 9.5 11.3" fill="none" stroke="#555" stroke-width="1.4"/><circle cx="9.5" cy="13.8" r="0.9" fill="#555"/></svg>
</body></html>
